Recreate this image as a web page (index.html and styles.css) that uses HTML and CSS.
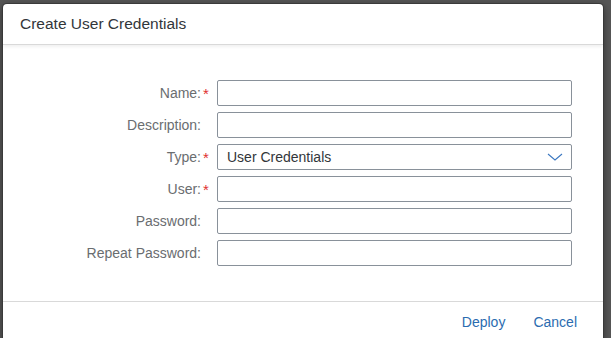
FILE: index.html
```html
<!DOCTYPE html>
<html lang="en">
<head>
    <meta charset="UTF-8">
    <title>Create User Credentials</title>
    <link rel="stylesheet" href="styles.css">
</head>
<body>
    <div class="dialog">
        <header class="dialog-header">
            <h1>Create User Credentials</h1>
        </header>

        <div class="dialog-content">
            <form class="form">
                <label class="form-label required" for="name">Name:<span class="star">*</span></label>
                <input class="form-input" id="name" type="text">

                <label class="form-label" for="description">Description:<span class="star"></span></label>
                <input class="form-input" id="description" type="text">

                <label class="form-label required" for="type">Type:<span class="star">*</span></label>
                <div class="form-select" id="type">
                    <span>User Credentials</span>
                    <svg class="chevron" width="16" height="8" viewBox="0 0 16 8">
                        <path d="M1 1 L8 7 L15 1" fill="none" stroke="#3b77c0" stroke-width="1.1"/>
                    </svg>
                </div>

                <label class="form-label required" for="user">User:<span class="star">*</span></label>
                <input class="form-input" id="user" type="text">

                <label class="form-label" for="password">Password:<span class="star"></span></label>
                <input class="form-input" id="password" type="password">

                <label class="form-label" for="repeat">Repeat Password:<span class="star"></span></label>
                <input class="form-input" id="repeat" type="password">
            </form>
        </div>

        <footer class="dialog-footer">
            <button class="btn" type="button">Deploy</button>
            <button class="btn" type="button">Cancel</button>
        </footer>
    </div>
</body>
</html>
```

FILE: styles.css
```css
* {
    margin: 0;
    padding: 0;
    box-sizing: border-box;
}

body {
    font-family: "Liberation Sans", Arial, sans-serif;
    background: #575757;
    padding: 4px 0 0 3px;
    overflow: hidden;
    color: #32363a;
}

.dialog {
    width: 600px;
    background: #fff;
    border-radius: 4px;
    box-shadow: 0 0 0 1px #3a3a3a, 0 2px 8px rgba(0, 0, 0, 0.5);
}

.dialog-header {
    height: 41px;
    padding: 0 17px;
    display: flex;
    align-items: center;
    border-bottom: 1px solid #d9d9d9;
    box-shadow: 0 2px 3px rgba(0, 0, 0, 0.06);
}

h1 {
    font-size: 15.5px;
    font-weight: normal;
    color: #32363a;
}

.dialog-content {
    height: 256px;
    padding-top: 35px;
}

.form {
    display: grid;
    grid-template-columns: 207px 355px;
    column-gap: 7px;
    row-gap: 6px;
}

.form-label {
    display: flex;
    justify-content: flex-end;
    align-items: center;
    font-size: 14px;
    color: #6a6d70;
}

.star {
    display: inline-block;
    width: 9px;
    padding-left: 2px;
    color: #e0302f;
    font-size: 15px;
}

.form-input,
.form-select {
    height: 26px;
    border: 1px solid #89919a;
    border-radius: 2px;
    background: #fff;
    font-family: inherit;
    font-size: 14px;
    padding: 0 9px;
}

.form-select {
    display: flex;
    align-items: center;
    justify-content: space-between;
    color: #32363a;
}

.chevron {
    margin-right: -1px;
}

.dialog-footer {
    height: 41px;
    border-top: 1px solid #d9d9d9;
    display: flex;
    justify-content: flex-end;
    align-items: center;
    gap: 12px;
    padding-right: 18px;
}

.btn {
    background: none;
    border: none;
    font-family: inherit;
    font-size: 14px;
    color: #2b6cb0;
    padding: 6px 8px;
    cursor: pointer;
}
```
